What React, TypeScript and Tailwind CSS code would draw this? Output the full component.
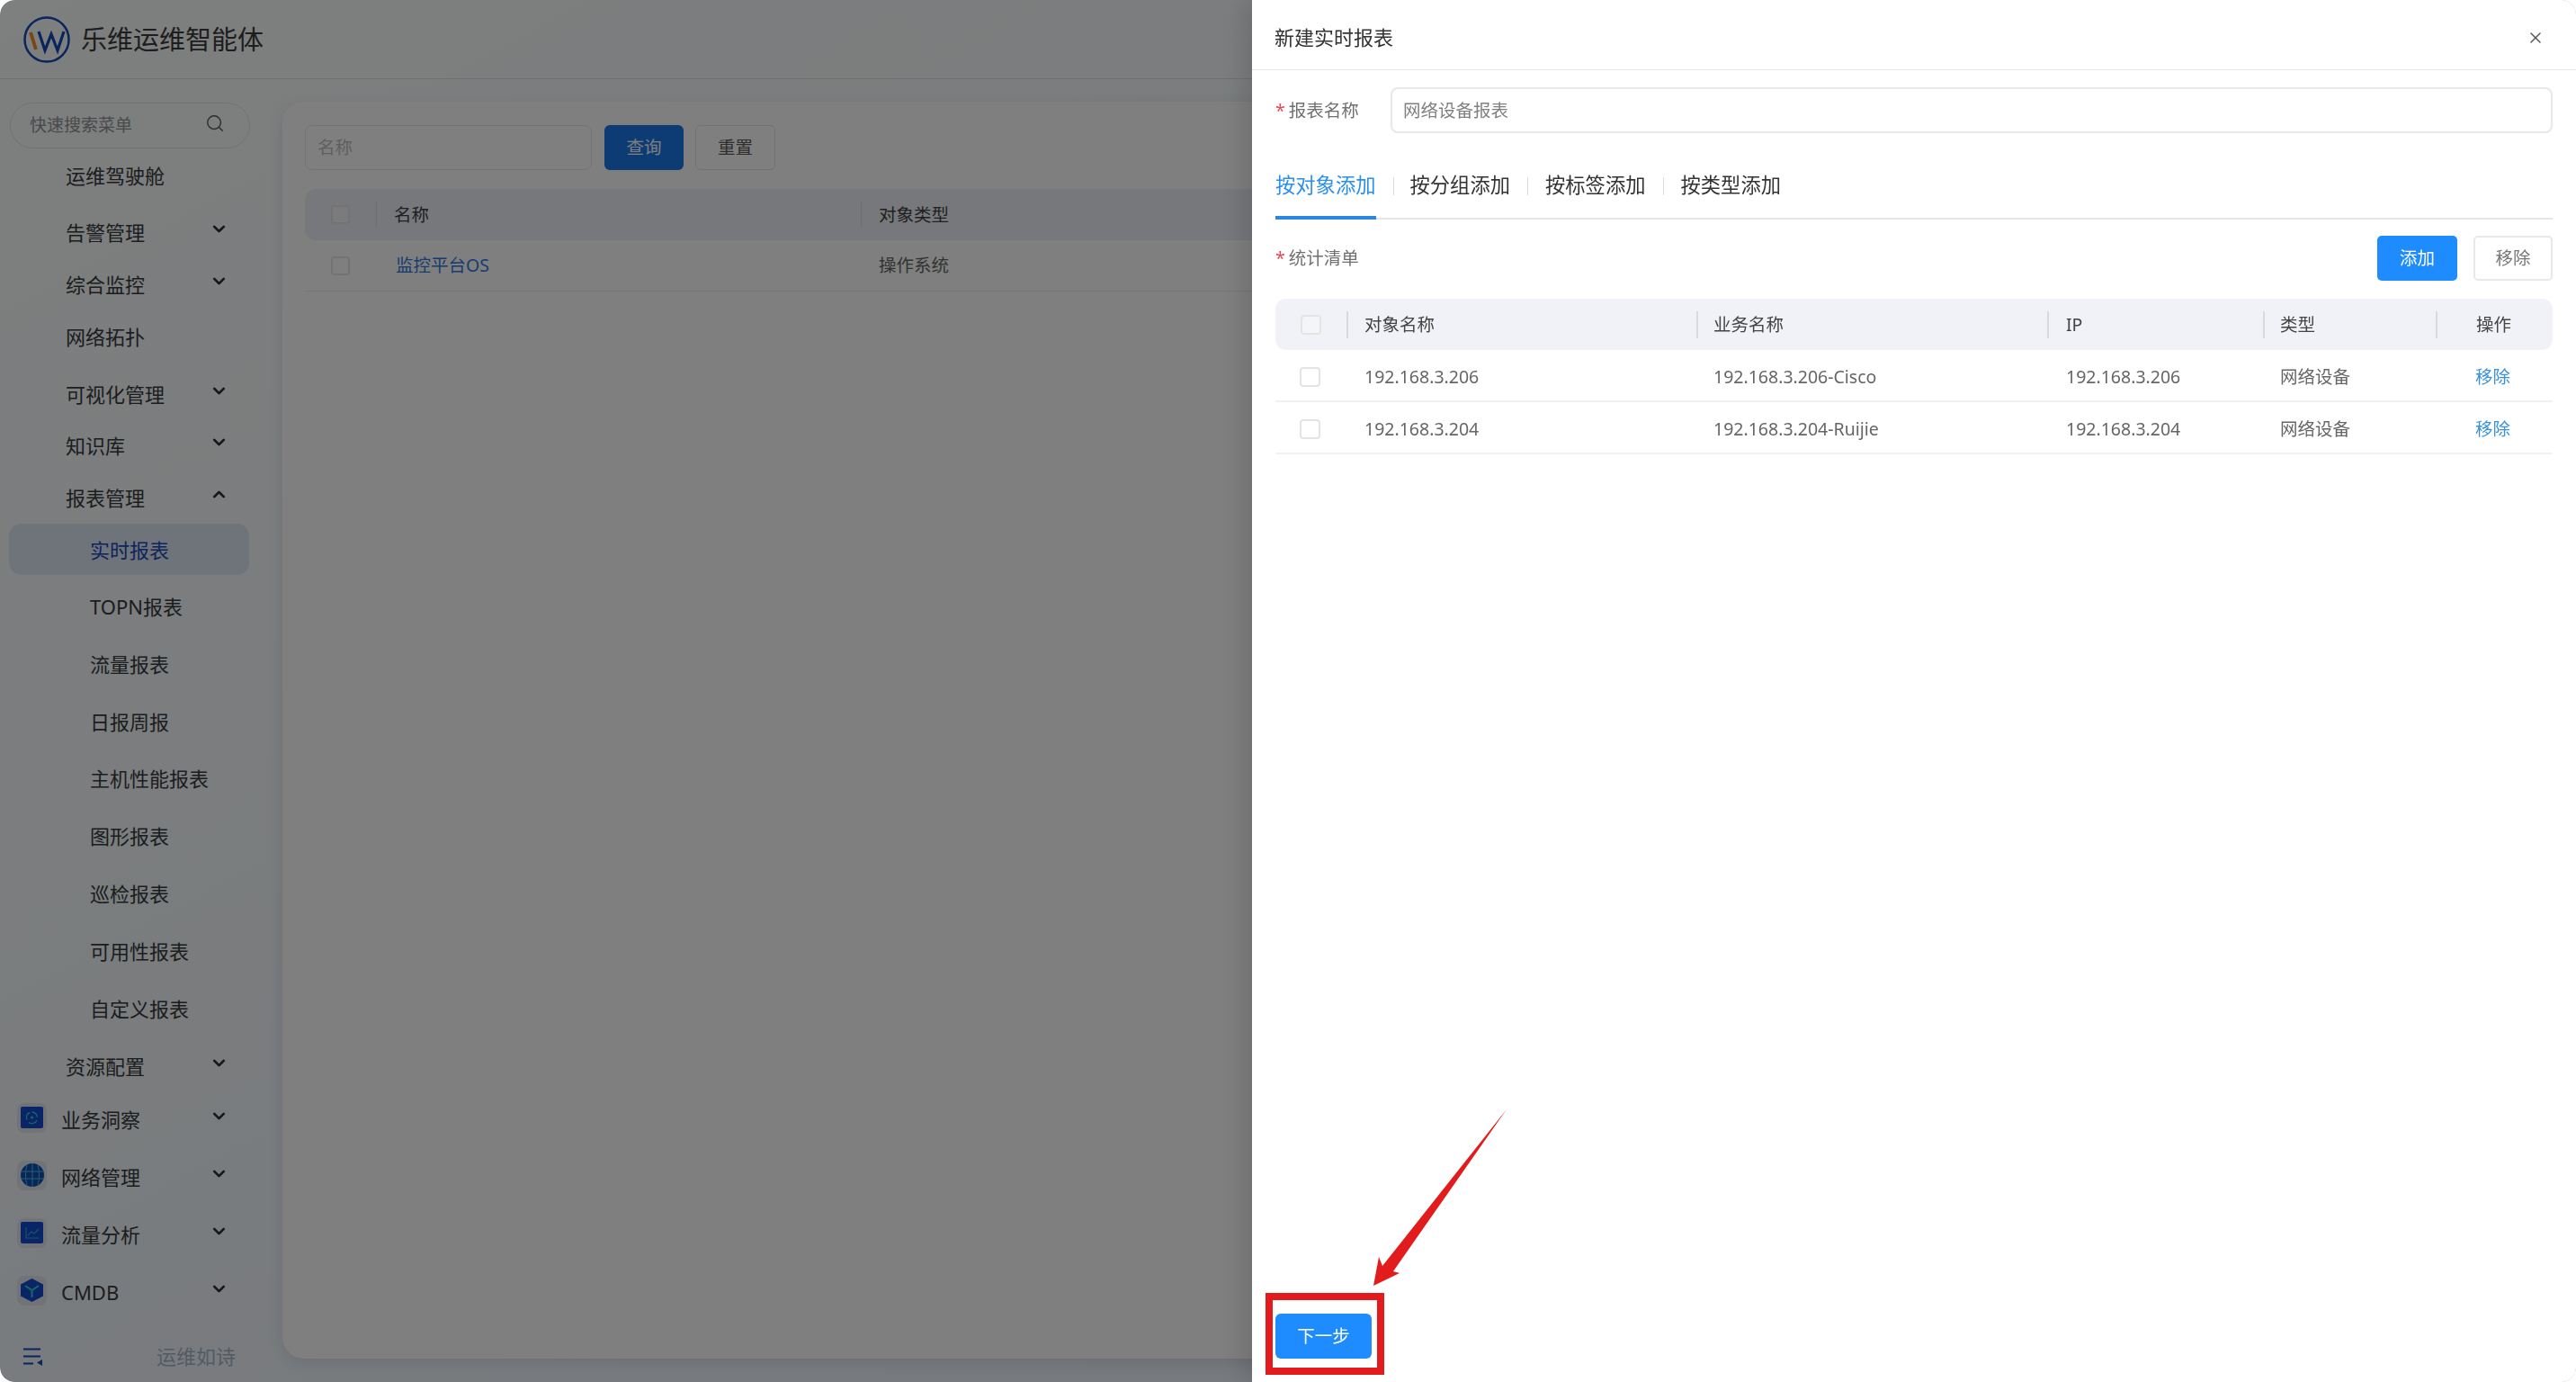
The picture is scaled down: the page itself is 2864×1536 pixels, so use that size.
import React from "react";
import { ChevronDown, ChevronUp, Search, X } from "lucide-react";

const navItems = [
  { label: "运维驾驶舱", top: "mt-[10px]", pl: "pl-[73px]" },
  { label: "告警管理", top: "mt-[23px]", pl: "pl-[73px]", arrow: "down" },
  { label: "综合监控", top: "mt-[18px]", pl: "pl-[73px]", arrow: "down" },
  { label: "网络拓扑", top: "mt-[18px]", pl: "pl-[73px]" },
  { label: "可视化管理", top: "mt-[24px]", pl: "pl-[73px]", arrow: "down" },
  { label: "知识库", top: "mt-[17px]", pl: "pl-[73px]", arrow: "down" },
  { label: "报表管理", top: "mt-[18px]", pl: "pl-[73px]", arrow: "up" },
  { label: "实时报表", top: "mt-[18px]", pl: "pl-[100px]", active: true },
  { label: "TOPN报表", top: "mt-[23px]", pl: "pl-[100px]" },
  { label: "流量报表", top: "mt-[24px]", pl: "pl-[100px]" },
  { label: "日报周报", top: "mt-[24px]", pl: "pl-[100px]" },
  { label: "主机性能报表", top: "mt-[23px]", pl: "pl-[100px]" },
  { label: "图形报表", top: "mt-[24px]", pl: "pl-[100px]" },
  { label: "巡检报表", top: "mt-[24px]", pl: "pl-[100px]" },
  { label: "可用性报表", top: "mt-[24px]", pl: "pl-[100px]" },
  { label: "自定义报表", top: "mt-[24px]", pl: "pl-[100px]" },
  { label: "资源配置", top: "mt-[24px]", pl: "pl-[73px]", arrow: "down" },
  { label: "业务洞察", top: "mt-[19px]", icon: "insight", arrow: "down" },
  { label: "网络管理", top: "mt-[24px]", icon: "globe", arrow: "down" },
  { label: "流量分析", top: "mt-[24px]", icon: "chart", arrow: "down" },
  { label: "CMDB", top: "mt-[24px]", icon: "cube", arrow: "down" },
];

const drawerRows = [
  { name: "192.168.3.206", biz: "192.168.3.206-Cisco", ip: "192.168.3.206", type: "网络设备" },
  { name: "192.168.3.204", biz: "192.168.3.204-Ruijie", ip: "192.168.3.204", type: "网络设备" },
];

const NavIcon = ({ name }: { name: string }) => {
  return (
    <span className="absolute left-[19px] top-[-1px] flex h-[33px] w-[33px] items-center justify-center rounded-[8px] bg-[#e2e7ef]">
      {name === "insight" && (
        <svg width="25" height="24" viewBox="0 0 25 24">
          <rect width="25" height="24" rx="2" fill="#1448d0" />
          <path d="M12.500 6a6 6 0 0 1 6 6M18 15a6 6 0 0 1-9 2.500M7 14.500a6 6 0 0 1 3-8" fill="none" stroke="#35c7c0" strokeWidth="1.400" />
          <circle cx="12.500" cy="12" r="1.600" fill="#35c7c0" />
        </svg>
      )}
      {name === "globe" && (
        <svg width="26" height="26" viewBox="0 0 26 26">
          <circle cx="13" cy="13" r="13" fill="#1448b8" />
          <path d="M0 9h26M0 17h26M13 0v26M7 2c-2 7-2 15 0 22M19 2c2 7 2 15 0 22" fill="none" stroke="#40c8c8" strokeWidth="1" />
        </svg>
      )}
      {name === "chart" && (
        <svg width="25" height="24" viewBox="0 0 25 24">
          <rect width="25" height="24" rx="2" fill="#1448d0" />
          <path d="M6 6v12h14M8 15l4-4 3 2 5-5" fill="none" stroke="#35a8b8" strokeWidth="1.200" />
        </svg>
      )}
      {name === "cube" && (
        <svg width="25" height="26" viewBox="0 0 25 26">
          <path d="M12.500 0L25 6.500v13L12.500 26 0 19.500V6.500z" fill="#1448d0" />
          <path d="M5 8l7.500 5L20 8M12.500 13v8" fill="none" stroke="#35d0b8" strokeWidth="2" />
        </svg>
      )}
    </span>
  );
};

const Sidebar = () => {
  return (
    <aside className="flex h-full w-[314px] shrink-0 flex-col">
      <div className="ml-[11px] mt-[26px] flex h-[51px] w-[267px] shrink-0 items-center justify-between rounded-full border border-[#dfe3e8] pl-[21px] pr-[27px]">
        <span className="text-[19px] text-[#8f9397]">快速搜索菜单</span>
        <Search size={22} strokeWidth={1.600} className="-translate-y-[3px] text-[#55585c]" />
      </div>
      {navItems.map((item) => (
        <div
          key={item.label}
          className={`relative ml-[10px] flex h-[40px] w-[267px] shrink-0 items-center ${item.top}`}
        >
          {item.active && (
            <div className="absolute -top-[9px] left-0 h-[57px] w-[267px] rounded-[14px] bg-[#dfe7f5]" />
          )}
          <div className="relative flex h-full w-full items-center text-[22px] text-[#363a3e]">
            {item.icon && <div className="relative -ml-[10px] h-[33px] w-[58px] -translate-y-[1px]"><NavIcon name={item.icon} /></div>}
            {item.pl === "pl-[73px]" && <span className="ml-[63px]">{item.label}</span>}
            {item.pl === "pl-[100px]" && (
              <span className={`ml-[90px] ${item.active ? "text-[#1c49b8]" : ""}`}>{item.label}</span>
            )}
            {item.icon && <span className="ml-[10px]">{item.label}</span>}
            {item.arrow === "down" && (
              <ChevronDown size={21} strokeWidth={3.200} className="absolute left-[223px] -translate-y-[4px] text-[#2e3034]" />
            )}
            {item.arrow === "up" && (
              <ChevronUp size={21} strokeWidth={3.200} className="absolute left-[223px] -translate-y-[4px] text-[#2e3034]" />
            )}
          </div>
        </div>
      ))}
      <div className="mb-[9px] mt-auto flex h-[40px] shrink-0 items-center justify-between pl-[26px] pr-[52px]">
        <svg width="22" height="20" viewBox="0 0 22 20" className="translate-y-[1px]">
          <path d="M0 1.500h19M0 9.500h19M0 17.500h11" fill="none" stroke="#1448b8" strokeWidth="2.200" />
          <path d="M21 13v7l-6-3.500z" fill="#1448b8" />
        </svg>
        <span className="text-[22px] text-[#a8b4c8]">运维如诗</span>
      </div>
    </aside>
  );
};

const ReportPage = () => {
  return (
    <div className="flex h-[1536px] flex-col bg-gradient-to-br from-[#fcfffe] to-[#e9f0fb]">
      <header className="flex h-[88px] shrink-0 items-center gap-[12px] border-b border-[#dde3e6] pl-[26px]">
        <svg width="52" height="52" viewBox="0 0 52 52">
          <circle cx="26" cy="26" r="24.500" fill="none" stroke="#1448b8" strokeWidth="2.500" />
          <path d="M8 18l6 19" fill="none" stroke="#f08a28" strokeWidth="3.800" />
          <path d="M17 17l7 21 7-18 7 18 7-21" fill="none" stroke="#1448b8" strokeWidth="3.200" />
        </svg>
        <span className="text-[29px] text-[#3c3c3c]">乐维运维智能体</span>
      </header>
      <div className="flex min-h-0 flex-1">
        <Sidebar />
        <main className="mb-[26px] mr-[26px] mt-[25px] flex-1 rounded-[24px] bg-white pl-[25px] pr-[26px] pt-[26px] shadow-[0_4px_16px_rgba(90,110,150,0.18)]">
          <div className="flex items-center">
            <div className="flex h-[50px] w-[319px] items-center rounded-[8px] border border-[#e6e6e6] pl-[13px] text-[19.500px] text-[#c0c0c0]">
              名称
            </div>
            <div className="ml-[14px] flex h-[50px] w-[88px] items-center justify-center rounded-[6px] bg-[#1a78ea] text-[19.500px] text-white">
              查询
            </div>
            <div className="ml-[13px] flex h-[50px] w-[89px] items-center justify-center rounded-[6px] border border-[#e3e3e3] text-[19.500px] text-[#5c5c5c]">
              重置
            </div>
          </div>
          <div className="mt-[21px] flex h-[57px] items-center rounded-[12px] bg-[#eef1f8] text-[19.500px] text-[#404040]">
            <span className="ml-[29px] h-[21px] w-[21px] rounded-[4px] border-2 border-[#e6e6e6] bg-[#f6f7fa]" />
            <span className="ml-[29px] h-[30px] w-px bg-[#d9dde4]" />
            <span className="ml-[19px] w-[519px]">名称</span>
            <span className="h-[30px] w-px bg-[#d9dde4]" />
            <span className="ml-[19px]">对象类型</span>
          </div>
          <div className="flex h-[57px] items-center border-b border-[#eaeaea] text-[19.500px]">
            <span className="ml-[29px] h-[21px] w-[21px] rounded-[4px] border-2 border-[#e6e6e6]" />
            <span className="ml-[51px] w-[537px] text-[#2d79de]">监控平台OS</span>
            <span className="text-[#666]">操作系统</span>
          </div>
        </main>
      </div>
    </div>
  );
};

const Checkbox = ({ tint }: { tint?: boolean }) => {
  return (
    <span
      className={`block h-[22px] w-[23px] rounded-[4px] border-2 border-[#e4e4e4] ${tint ? "bg-[#f4f5f9]" : "bg-white"}`}
    />
  );
};

const HeadCell = ({ children, pad }: { children?: React.ReactNode; pad: string }) => {
  return (
    <div className="flex items-center">
      <span className="h-[30px] w-[2px] shrink-0 bg-[#d8dade]" />
      <span className={pad}>{children}</span>
    </div>
  );
};

const Drawer = () => {
  return (
    <section className="absolute bottom-0 right-0 top-0 flex w-[1472px] flex-col bg-white shadow-[-10px_0_24px_rgba(0,0,0,0.12)]">
      <div className="flex h-[78px] shrink-0 items-center justify-between border-b border-[#e8e8e8] pl-[25px] pr-[35px]">
        <h2 className="translate-y-[3px] text-[22px] font-normal text-[#333]">新建实时报表</h2>
        <X size={20} strokeWidth={1.800} className="translate-y-[3px] text-[#555]" />
      </div>
      <div className="flex min-h-0 flex-1 flex-col px-[26px]">
        <div className="mt-[19px] flex h-[51px] shrink-0 items-center">
          <span className="w-[128px] text-[19.500px] text-[#707070]">
            <span className="mr-[4px] text-[#e5484d]">*</span>报表名称
          </span>
          <div className="flex h-full flex-1 items-center rounded-[8px] border-2 border-[#e8e8e8] pl-[12px] text-[19.500px] text-[#808080]">
            网络设备报表
          </div>
        </div>
        <div className="mt-[32px] flex h-[64px] shrink-0 border-b-2 border-[#e6e6e6] text-[22.300px] text-[#333]">
          <span className="-mb-[2px] h-[64px] border-b-[4px] border-[#2a86e0] leading-[52px] text-[#2a8fee]">按对象添加</span>
          <span className="ml-[19px] mr-[18px] mt-[17px] h-[20px] w-px bg-[#dcdcdc]" />
          <span className="leading-[52px]">按分组添加</span>
          <span className="mx-[19px] mt-[17px] h-[20px] w-px bg-[#dcdcdc]" />
          <span className="leading-[52px]">按标签添加</span>
          <span className="mx-[19px] mt-[17px] h-[20px] w-px bg-[#dcdcdc]" />
          <span className="leading-[52px]">按类型添加</span>
        </div>
        <div className="mt-[18px] flex h-[50px] shrink-0 items-center justify-between">
          <span className="text-[19.500px] text-[#707070]">
            <span className="mr-[4px] text-[#e5484d]">*</span>统计清单
          </span>
          <div className="flex gap-[18px] text-[19.500px]">
            <button className="h-[50px] w-[89px] rounded-[5px] bg-[#1e8bff] text-white">添加</button>
            <button className="h-[50px] w-[88px] rounded-[5px] border-2 border-[#e8e8e8] text-[#777]">移除</button>
          </div>
        </div>
        <div className="mt-[20px] grid h-[57px] shrink-0 grid-cols-[79px_389px_390px_240px_192px_130px] items-center rounded-[12px] bg-[#f0f2f7] text-[19.500px] text-[#444]">
          <div className="pl-[28px]"><Checkbox tint /></div>
          <HeadCell pad="pl-[18px]">对象名称</HeadCell>
          <HeadCell pad="pl-[17px]">业务名称</HeadCell>
          <HeadCell pad="pl-[19px]">IP</HeadCell>
          <HeadCell pad="pl-[17px]">类型</HeadCell>
          <HeadCell pad="pl-[43px]">操作</HeadCell>
        </div>
        {drawerRows.map((row) => (
          <div
            key={row.name}
            className="grid h-[58px] shrink-0 grid-cols-[79px_389px_390px_240px_192px_130px] items-center border-b-2 border-[#f0f0f0] pt-[4px] text-[19.500px] text-[#666]"
          >
            <div className="pl-[27px]"><Checkbox /></div>
            <span className="pl-[20px]">{row.name}</span>
            <span className="pl-[19px]">{row.biz}</span>
            <span className="pl-[21px]">{row.ip}</span>
            <span className="pl-[19px]">{row.type}</span>
            <span className="pl-[44px] text-[#3a92dc]">移除</span>
          </div>
        ))}
        <div className="mt-auto pb-[26px]">
          <button className="h-[50px] w-[107px] rounded-[6px] bg-[#1e8bff] text-[19.500px] text-white">下一步</button>
        </div>
      </div>
    </section>
  );
};

export default function App() {
  return (
    <div className="h-[1536px] w-[2864px] overflow-hidden bg-white font-['Noto_Sans','Noto_Sans_CJK_SC',sans-serif]">
      <div className="relative h-full w-full overflow-hidden rounded-[16px]">
        <ReportPage />
        <div className="absolute inset-0 bg-black/50 backdrop-blur-[0.5px]" />
        <Drawer />
        {/* annotation drawn over the screenshot */}
        <div className="absolute left-[1407px] top-[1437px] h-[91px] w-[132px] border-[8px] border-[#e21c1c]" />
        <svg width="160" height="202" viewBox="0 0 160 202" className="absolute left-[1520px] top-[1230px]">
          <polygon points="155,3 29,183 36,185 7,199 13,167 17,177" fill="#e21c1c" />
        </svg>
      </div>
    </div>
  );
}
